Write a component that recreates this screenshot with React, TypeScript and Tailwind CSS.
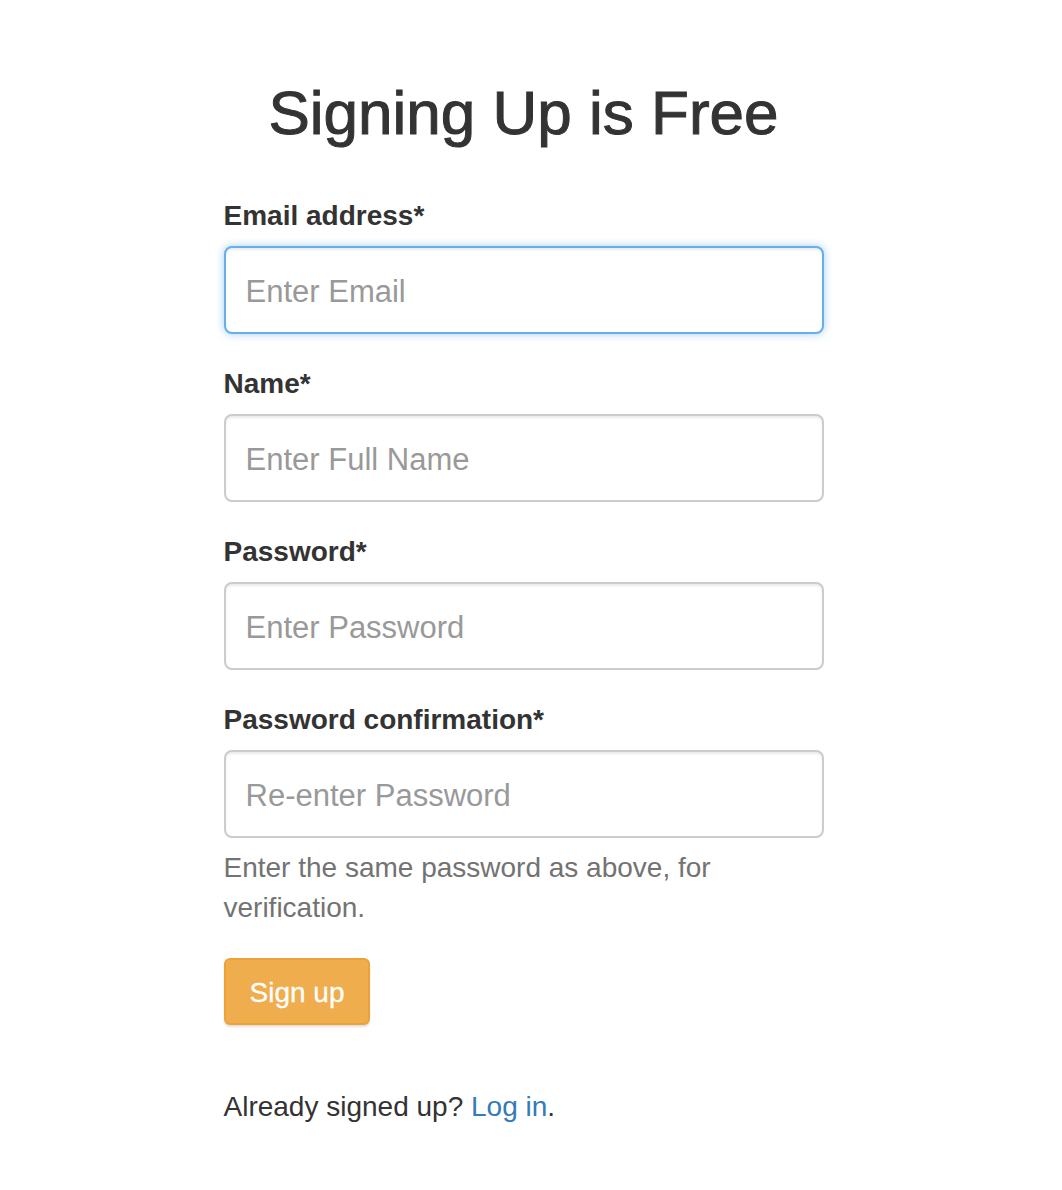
import React from "react";

const font = { fontFamily: '"Liberation Sans", Arial, Helvetica, sans-serif' };

function Field({
  label,
  placeholder,
  type = "text",
  focused = false,
  help,
}: {
  label: string;
  placeholder: string;
  type?: string;
  focused?: boolean;
  help?: string;
}) {
  return (
    <div className="mb-[30px]">
      <label className="block font-bold text-[28px] leading-[40px] text-[#333] mb-[10px]">{label}</label>
      <input
        type={type}
        placeholder={placeholder}
        className={
          "block w-full h-[88px] px-[20px] pt-[3px] rounded-[8px] border-2 bg-white text-[31px] text-[#555] outline-none placeholder:text-[#999] " +
          (focused
            ? "border-[#66afe9] shadow-[inset_0_2px_2px_rgba(0,0,0,0.075),0_0_8px_rgba(102,175,233,0.6)]"
            : "border-[#ccc] shadow-[inset_0_2px_2px_rgba(0,0,0,0.075)]")
        }
      />
      {help && <p className="mt-[10px] text-[28px] leading-[40px] text-[#737373]">{help}</p>}
    </div>
  );
}

export default function App() {
  return (
    <div className="min-h-[1190px] bg-white pr-[15px]" style={font}>
      <div className="w-[600px] mx-auto pt-[80px]">
        <h1 className="text-center text-[62px] leading-[66px] font-medium text-[#333] [-webkit-text-stroke:1px_#333]">
          Signing Up is Free
        </h1>
        <form className="mt-[50px]" onSubmit={(e) => e.preventDefault()}>
          <Field label="Email address*" placeholder="Enter Email" type="email" focused />
          <Field label="Name*" placeholder="Enter Full Name" />
          <Field label="Password*" placeholder="Enter Password" type="password" />
          <Field
            label="Password confirmation*"
            placeholder="Re-enter Password"
            type="password"
            help="Enter the same password as above, for verification."
          />
          <button
            type="submit"
            className="block h-[67px] px-[24px] pt-[2px] rounded-[6px] border-2 border-[#eea236] bg-[#f0ad4e] text-white text-[28px] leading-[40px] shadow-[0_2px_2px_rgba(0,0,0,0.12)] [-webkit-text-stroke:0.3px_#fff]"
          >
            Sign up
          </button>
        </form>
        <p className="mt-[62px] text-[28px] leading-[40px] text-[#333]">
          Already signed up? <a href="#" className="text-[#337ab7]">Log in</a>.
        </p>
      </div>
    </div>
  );
}
